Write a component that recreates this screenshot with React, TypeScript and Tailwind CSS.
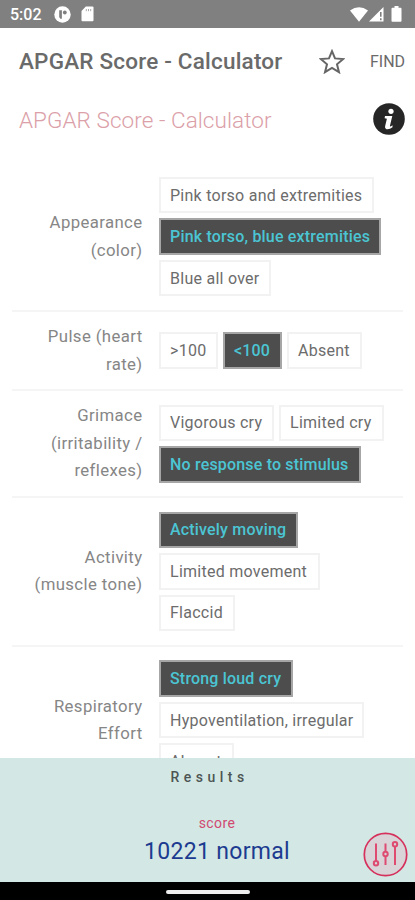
import { useState } from 'react';
import clsx from 'clsx';

type Option = { label: string; width: string };
type Criterion = { lines: string[]; options: Option[]; initial: number; height: string };

const criteria: Criterion[] = [
  {
    lines: ['Appearance', '(color)'],
    options: [
      { label: 'Pink torso and extremities', width: 'w-[214.5px]' },
      { label: 'Pink torso, blue extremities', width: 'w-[221.5px]' },
      { label: 'Blue all over', width: 'w-[112px]' },
    ],
    initial: 1,
    height: 'h-[149px]',
  },
  {
    lines: ['Pulse (heart', 'rate)'],
    options: [
      { label: '>100', width: 'w-[59px]' },
      { label: '<100', width: 'w-[59px]' },
      { label: 'Absent', width: 'w-[75px]' },
    ],
    initial: 1,
    height: 'h-[79px]',
  },
  {
    lines: ['Grimace', '(irritability /', 'reflexes)'],
    options: [
      { label: 'Vigorous cry', width: 'w-[115px]' },
      { label: 'Limited cry', width: 'w-[105px]' },
      { label: 'No response to stimulus', width: 'w-[202px]' },
    ],
    initial: 2,
    height: 'h-[107px]',
  },
  {
    lines: ['Activity', '(muscle tone)'],
    options: [
      { label: 'Actively moving', width: 'w-[138.5px]' },
      { label: 'Limited movement', width: 'w-[160.5px]' },
      { label: 'Flaccid', width: 'w-[75.5px]' },
    ],
    initial: 0,
    height: 'h-[148.5px]',
  },
  {
    lines: ['Respiratory', 'Effort'],
    options: [
      { label: 'Strong loud cry', width: 'w-[133.5px]' },
      { label: 'Hypoventilation, irregular', width: 'w-[205px]' },
      { label: 'Absent', width: 'w-[75px]' },
    ],
    initial: 0,
    height: 'h-[147px]',
  },
];

function StatusBar() {
  return (
    <div className="flex h-7 shrink-0 items-center bg-[#808080] pl-2.5 pr-[13px] text-white">
      <span className="mt-0.5 w-[44px] text-base font-medium leading-none">5:02</span>
      <svg className="h-[17px] w-[17px]" viewBox="0 0 17 17">
        <circle cx="8.5" cy="8.5" r="8.2" fill="white" />
        <path d="M5.2 4.2h2.7v8.5H6.3L5.2 11z" fill="#808080" />
        <circle cx="10.8" cy="6.5" r="1.9" fill="#808080" />
      </svg>
      <svg className="ml-2.5 h-4 w-[13px]" viewBox="0 0 13 16">
        <path d="M4.8.5h6.7q1 0 1 1v12.8q0 1-1 1h-10q-1 0-1-1V5z" fill="white" />
        <path d="M5.3 3v2.2M7.5 3v2.2M9.7 3v2.2" stroke="#aaa" strokeWidth="1" />
      </svg>
      <svg className="ml-auto h-[15px] w-[18px]" viewBox="0 0 18 15">
        <path d="M0 3.6Q9-3.2 18 3.6L9 14.8z" fill="white" />
      </svg>
      <svg className="ml-px h-[15px] w-[15px]" viewBox="0 0 15 15">
        <path d="M0 14.5 14.5 0v14.5z" fill="white" />
        <path d="M11.8 5v4.8M11.8 11.2v2" stroke="#777" strokeWidth="1.5" />
      </svg>
      <svg className="ml-[7px] h-4 w-[11px]" viewBox="0 0 11 16">
        <path d="M3.5 0h4v1.7h2q1 0 1 1V15q0 .8-1 .8h-8q-1 0-1-.8V2.7q0-1 1-1h2z" fill="white" />
      </svg>
    </div>
  );
}

function Header() {
  return (
    <header className="flex h-[66px] shrink-0 items-center pl-[19px] pr-[9px] text-[#6a6a6a]">
      <h1 className="whitespace-nowrap pt-0.5 text-[22.5px] font-medium tracking-[0.2px]">APGAR Score - Calculator</h1>
      <svg className="ml-auto h-[25px] w-[26px]" viewBox="0 0 26 25" fill="none">
        <path
          d="M13 2.2 16 9.4 24.2 10 18 15.3 20 23.2 13 19 6 23.2 8 15.3 1.8 10 10 9.4z"
          stroke="#666"
          strokeWidth="2"
        />
      </svg>
      <button className="ml-[25px] w-9 whitespace-nowrap pt-0.5 text-left text-base leading-none">FIND</button>
    </header>
  );
}

function CriterionRow({ criterion, last }: { criterion: Criterion; last: boolean }) {
  const [selected, setSelected] = useState(criterion.initial);

  return (
    <div
      className={clsx(
        'mx-3 flex shrink-0 items-center',
        !last && 'border-b-2 border-[#f5f5f5]',
        criterion.height,
      )}
    >
      <div className="w-[130.5px] whitespace-nowrap text-right text-[16.75px] leading-[27.5px] tracking-[0.38px] text-[#868686]">
        {criterion.lines.map((line) => (
          <div key={line}>{line}</div>
        ))}
      </div>
      <div className="ml-[16.5px] flex w-[240px] flex-wrap gap-[5px]">
        {criterion.options.map((option, i) => (
          <button
            key={option.label}
            type="button"
            onClick={() => setSelected(i)}
            className={clsx(
              'h-[36.5px] whitespace-nowrap border-2 pl-[9px] pt-px text-left text-base leading-none',
              option.width,
              i === selected
                ? 'border-[#a6a6a6] bg-[#4d4d4d] font-medium tracking-[0.18px] text-[#4bc5d3]'
                : 'border-[#f2f2f2] bg-white tracking-[0.26px] text-[#6c6c6c]',
            )}
          >
            {option.label}
          </button>
        ))}
      </div>
    </div>
  );
}

function Results() {
  return (
    <section className="relative flex h-[124px] shrink-0 flex-col items-center bg-[#d3e8e4]">
      <h3 className="mt-[9px] pl-1 text-sm font-medium leading-5 tracking-[4.5px] text-[#4d5554]">Results</h3>
      <div className="mt-[26px] pl-[19px] text-sm leading-5 tracking-[0.4px] text-[#d04a72]">score</div>
      <div className="pl-[19px] pt-[3px] text-[23px] leading-8 tracking-[0.3px] text-[#1c3b90]">10221 normal</div>
      <button type="button" className="absolute left-[363px] top-[74px]">
        <svg className="h-[45px] w-[45px]" viewBox="0 0 45 45" fill="none" stroke="#d6315c">
          <circle cx="22.5" cy="22.5" r="21.2" fill="#d8d4d8" strokeWidth="1.7" />
          <g strokeWidth="2" stroke="#de4a70">
            <path d="M13 11.5v17.5M22.5 11.5v8M22.5 24.5v8.5M32 14.5v18.5" />
            <circle cx="13" cy="31.3" r="2.2" />
            <circle cx="22.5" cy="22" r="2.2" />
            <circle cx="32" cy="12.3" r="2.2" />
          </g>
        </svg>
      </button>
    </section>
  );
}

export default function App() {
  return (
    <div className="flex h-[900px] w-[415px] flex-col overflow-hidden bg-white font-[Roboto,sans-serif]">
      <StatusBar />
      <Header />
      <div className="flex h-[69px] shrink-0 items-start justify-between pl-[19px] pr-[10px] pt-[9px]">
        <h2 className="whitespace-nowrap text-[22.5px] font-light leading-[34px] tracking-[0.06px] text-[#dba0a8]">
          APGAR Score - Calculator
        </h2>
        <svg className="h-8 w-8" viewBox="0 0 32 32">
          <circle cx="16" cy="16" r="15.8" fill="#262626" />
          <circle cx="18" cy="8.3" r="2.6" fill="white" />
          <path d="M12 13h7.3l-2.4 10q-.2 1.2 2.6-.8v2q-3 2.5-6 2-2-.5-1.4-3l1.8-7.5-2.3-.5z" fill="white" />
        </svg>
      </div>
      <div className="flex min-h-0 flex-1 flex-col overflow-hidden">
        {criteria.map((criterion, i) => (
          <CriterionRow key={criterion.lines[0]} criterion={criterion} last={i === criteria.length - 1} />
        ))}
      </div>
      <Results />
      <div className="flex h-[18px] shrink-0 justify-center bg-black pt-2">
        <div className="h-1 w-[84px] rounded-full bg-[#eee]" />
      </div>
    </div>
  );
}
